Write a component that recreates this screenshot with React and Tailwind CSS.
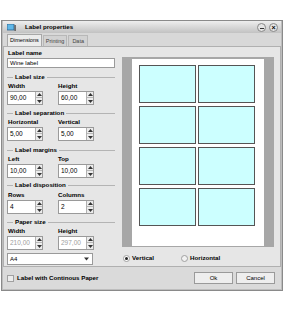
import React from "react";

function Spin({ value, disabled, w = "w-[36px]" }) {
  return (
    <div className={`flex h-[14px] ${w} border border-[#9a9a9a] bg-white`}>
      <div className={`flex-1 pl-[2px] text-[6.5px] leading-[12px] ${disabled ? "text-[#a0a0a0]" : "text-black"}`}>{value}</div>
      <div className="flex w-[7px] flex-col border-l border-[#b0b0b0] bg-[#ececec]">
        <div className="flex h-1/2 items-center justify-center border-b border-[#b8b8b8]">
          <svg width="5" height="3" viewBox="0 0 5 3"><path d="M0 3 L2.5 0 L5 3 Z" fill="#333" /></svg>
        </div>
        <div className="flex h-1/2 items-center justify-center">
          <svg width="5" height="3" viewBox="0 0 5 3"><path d="M0 0 L2.5 3 L5 0 Z" fill="#333" /></svg>
        </div>
      </div>
    </div>
  );
}

function Section({ title }) {
  return (
    <div className="flex h-[8px] items-center">
      <div className="h-px w-[6px] bg-[#b4b4b4]" />
      <div className="px-[2px] text-[6.2px] font-bold leading-[8px]">{title}</div>
      <div className="h-px flex-1 bg-[#b4b4b4]" />
    </div>
  );
}

function Pair({ a, b, va, vb, disabled }) {
  return (
    <div className="flex flex-col">
      <div className="flex h-[8px] text-[6.2px] font-bold leading-[8px]">
        <div className="w-[51px] pl-[1px]">{a}</div>
        <div>{b}</div>
      </div>
      <div className="mt-[1px] flex">
        <div className="w-[51px]"><Spin value={va} disabled={disabled} /></div>
        <Spin value={vb} disabled={disabled} />
      </div>
    </div>
  );
}

function Label() {
  return <div className="h-[38px] w-[57px] border border-[#555] bg-[#ccffff]" />;
}

export default function App() {
  return (
    <div className="h-[311px] w-[285px] bg-white font-['Liberation_Sans',Arial,sans-serif] text-black">
      <div className="h-[20px]" />
      <div className="ml-[1px] flex h-[271px] w-[282px] flex-col border border-[#8a8a8a] bg-[#bdbdbd] px-[1px] pb-[1px]">
        {/* title bar */}
        <div className="flex h-[12px] items-center bg-gradient-to-b from-[#eeeeee] to-[#c2c2c2] pl-[4px] pr-[3px]">
          <svg width="9" height="7" viewBox="0 0 9 7">
            <rect x="0" y="0" width="7" height="6" fill="#5fb7e8" stroke="#2b5f8a" strokeWidth="0.8" />
            <rect x="7.5" y="1" width="1.2" height="6" fill="#444" />
          </svg>
          <div className="ml-[9px] text-[6.2px] font-bold leading-[8px]">Label properties</div>
          <div className="flex-1" />
          <div className="flex h-[9px] w-[9px] items-center justify-center rounded-full border border-[#888] bg-[#e4e4e4]">
            <div className="mt-[3px] h-px w-[4px] bg-[#333]" />
          </div>
          <div className="ml-[3px] flex h-[9px] w-[9px] items-center justify-center rounded-full border border-[#888] bg-[#e4e4e4] text-[7px] font-bold leading-[7px]">×</div>
        </div>
        {/* tabs */}
        <div className="flex h-[13px] items-end bg-[#d8d8d8] pl-[4px] text-[5.5px] leading-[11px]">
          <div className="h-[12px] border border-b-0 border-[#a8a8a8] bg-[#ececec] px-[2px]">Dimensions</div>
          <div className="ml-[1px] h-[11px] border border-b-0 border-[#b8b8b8] bg-[#d2d2d2] px-[2px] text-[#444]">Printing</div>
          <div className="ml-[1px] h-[11px] border border-b-0 border-[#b8b8b8] bg-[#d2d2d2] px-[3px] text-[#444]">Data</div>
        </div>
        {/* content panel */}
        <div className="flex h-[221px] border border-[#b0b0b0] bg-[#e6e6e6]">
          <div className="ml-[3px] flex w-[108px] flex-col pt-[2px]">
            <div className="h-[8px] pl-[1px] text-[6.2px] font-bold leading-[8px]">Label name</div>
            <div className="mt-[1px] h-[10px] border border-[#9a9a9a] bg-white pl-[2px] text-[6px] leading-[8px]">Wine label</div>
            <div className="mt-[5px]"><Section title="Label size" /></div>
            <div className="mt-[1px]"><Pair a="Width" b="Height" va="90,00" vb="60,00" /></div>
            <div className="mt-[4px]"><Section title="Label separation" /></div>
            <div className="mt-[1px]"><Pair a="Horizontal" b="Vertical" va="5,00" vb="5,00" /></div>
            <div className="mt-[5px]"><Section title="Label margins" /></div>
            <div className="mt-[1px]"><Pair a="Left" b="Top" va="10,00" vb="10,00" /></div>
            <div className="mt-[3px]"><Section title="Label disposition" /></div>
            <div className="mt-[2px]"><Pair a="Rows" b="Columns" va="4" vb="2" /></div>
            <div className="mt-[4px]"><Section title="Paper size" /></div>
            <div className="mt-[1px]"><Pair a="Width" b="Height" va="210,00" vb="297,00" disabled /></div>
            <div className="mt-[3px] flex h-[12px] w-[86px] items-center border border-[#9a9a9a] bg-white pl-[2px] text-[6px]">
              <div className="flex-1">A4</div>
              <svg width="7" height="4" viewBox="0 0 7 4" className="mr-[2px]"><path d="M1 0.5 L3.5 3.5 L6 0.5 Z" fill="#333" /></svg>
            </div>
          </div>
          <div className="ml-[7px] flex flex-col pt-[10px]">
            <div className="flex h-[190px] w-[152px] justify-center bg-[#a7a7a7] pt-[2px] pb-[1px]">
              <div className="flex h-[187px] w-[132px] flex-col gap-[3px] bg-white pl-[7px] pt-[6px]">
                {[0, 1, 2, 3].map((r) => (
                  <div key={r} className="flex gap-[2px]">
                    <Label />
                    <Label />
                  </div>
                ))}
              </div>
            </div>
            <div className="mt-[7px] flex h-[8px] items-center text-[6.2px] font-bold leading-[8px]">
              <div className="ml-[1px] flex h-[7px] w-[7px] items-center justify-center rounded-full border border-[#a0a0a0] bg-white">
                <div className="h-[3px] w-[3px] rounded-full bg-[#222]" />
              </div>
              <div className="ml-[2px] w-[49px]">Vertical</div>
              <div className="h-[7px] w-[7px] rounded-full border border-[#a0a0a0] bg-[#f2f2f2]" />
              <div className="ml-[2px]">Horizontal</div>
            </div>
          </div>
        </div>
        {/* bottom bar */}
        <div className="flex flex-1 items-center bg-[#dadada] pl-[4px] pr-[6px]">
          <div className="h-[7px] w-[7px] border border-[#a0a0a0] bg-[#ececec]" />
          <div className="ml-[3px] text-[6.2px] font-bold leading-[8px]">Label with Continous Paper</div>
          <div className="flex-1" />
          <div className="flex h-[12px] w-[39px] items-center justify-center border border-[#9a9a9a] bg-[#eeeeee] text-[6px]">Ok</div>
          <div className="ml-[3px] flex h-[12px] w-[39px] items-center justify-center border border-[#9a9a9a] bg-[#eeeeee] text-[6px]">Cancel</div>
        </div>
      </div>
    </div>
  );
}
